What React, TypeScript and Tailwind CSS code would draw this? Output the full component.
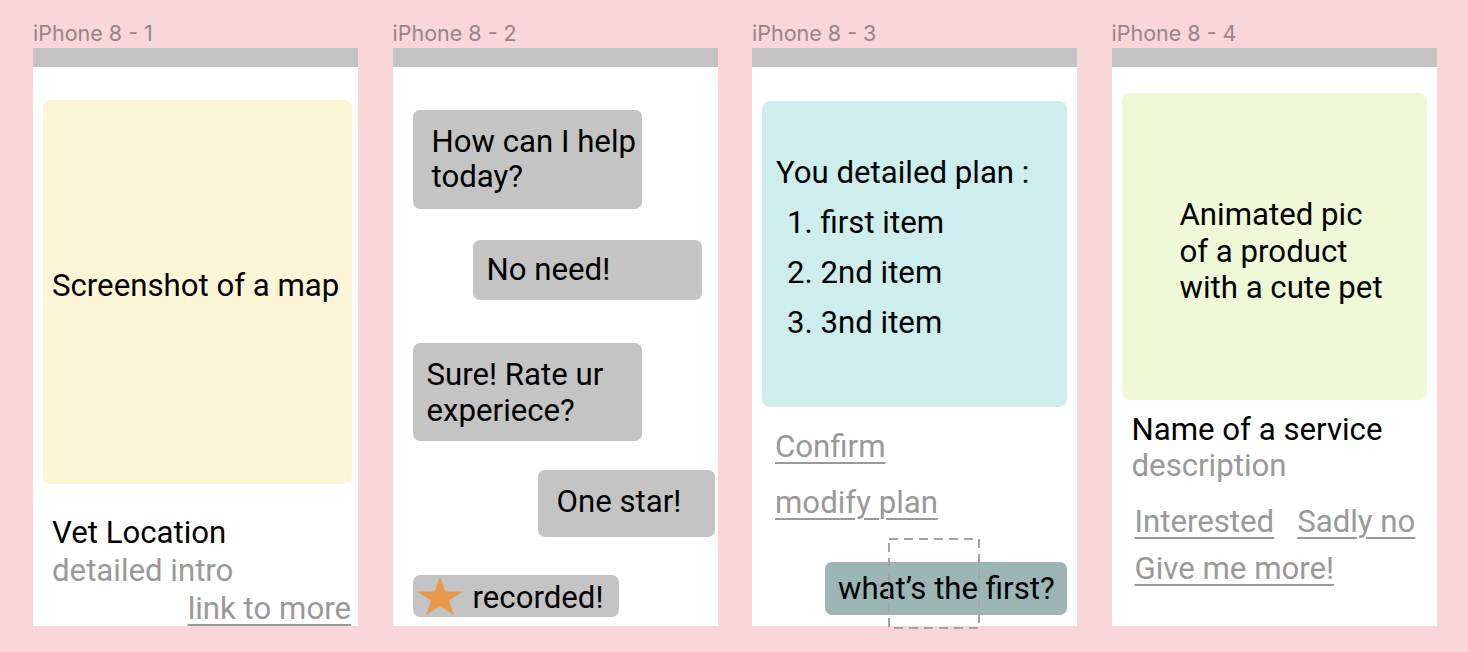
import React from "react";

// iPhone frame: label above, grey status bar, white body
function Frame({ label, children }: { label: string; children?: React.ReactNode }) {
  return (
    <div className="flex w-[325px] shrink-0 flex-col">
      <div className="h-[48px] pt-[21px] font-['Inter',_sans-serif] text-[21.5px] leading-[24px] text-[#978586]">{label}</div>
      <div className="relative flex h-[578px] flex-col bg-white [&>*]:shrink-0">
        <div className="h-[19px] bg-[#c4c4c4]" />
        {children}
      </div>
    </div>
  );
}

function Star() {
  return (
    <svg width="46" height="38" viewBox="0 0 46 38" className="shrink-0">
      <polygon
        points="23,0 28.4,14.5 46,14.5 31.8,23.5 37.2,38 23,29 8.8,38 14.2,23.5 0,14.5 17.6,14.5"
        fill="#e8994b"
      />
    </svg>
  );
}

const link = "underline decoration-[1.5px] underline-offset-[5px]";

export default function App() {
  return (
    <div className="flex h-[652px] w-full gap-[34.5px] overflow-hidden bg-[#f9d7d9] pl-[33px] font-['Roboto',_sans-serif] text-[31.2px] text-black">
      {/* 1: map */}
      <Frame label="iPhone 8 - 1">
        <div className="ml-[10px] mt-[33px] flex h-[384px] w-[309px] items-center rounded-[8px] bg-[#fcf6d6] pb-[11px] pl-[9px]">
          Screenshot of a map
        </div>
        <div className="mt-[30px] pl-[19px] pr-[7px] leading-[38px]">
          <p>Vet Location</p>
          <p className="text-[#999999]">detailed intro</p>
          <p className={`text-right text-[#999999] ${link}`}>link to more</p>
        </div>
      </Frame>

      {/* 2: chat */}
      <Frame label="iPhone 8 - 2">
        <div className="ml-[20px] mt-[43px] h-[99px] w-[229px] rounded-[7px] bg-[#c4c4c4] pl-[19px] pt-[14px] leading-[35px]">
          How can I help
          <br />
          today?
        </div>
        <div className="ml-[80px] mt-[31px] flex h-[60px] w-[229px] items-center rounded-[7px] bg-[#c4c4c4] pl-[14px]">
          No need!
        </div>
        <div className="ml-[20px] mt-[43px] h-[98px] w-[229px] rounded-[7px] bg-[#c4c4c4] pl-[14px] pt-[14px] leading-[36px]">
          Sure! Rate ur
          <br />
          experiece?
        </div>
        <div className="ml-[145px] mt-[29px] flex h-[67px] w-[177px] items-center rounded-[7px] bg-[#c4c4c4] pb-[3px] pl-[19px]">
          One star!
        </div>
        <div className="ml-[20px] mt-[38px] flex h-[42px] w-[206px] items-center gap-[10px] rounded-[7px] bg-[#c4c4c4] pl-[4px]">
          <Star />
          <span className="pt-[4px]">recorded!</span>
        </div>
      </Frame>

      {/* 3: plan */}
      <Frame label="iPhone 8 - 3">
        <div className="ml-[10px] mt-[34px] h-[306px] w-[305px] rounded-[8px] bg-[#cdeeed] pl-[14px] pt-[47px] leading-[50px]">
          <p>You detailed plan :</p>
          <p className="pl-[11px]">1. first item</p>
          <p className="pl-[11px]">2. 2nd item</p>
          <p className="pl-[11px]">3. 3nd item</p>
        </div>
        <div className="mt-[12px] pl-[23px] leading-[56px] text-[#999999]">
          <p><span className={link}>Confirm</span></p>
          <p><span className={link}>modify plan</span></p>
        </div>
        <div className="ml-[73px] mt-[31px] flex h-[53px] w-[242px] items-center rounded-[7px] bg-[#9bb6b5] pl-[13px] pt-[1px]">
          what’s the first?
        </div>
        <svg className="absolute left-[136px] top-[490px]" width="92" height="91" viewBox="0 0 92 91">
          <rect x="1" y="1" width="90" height="89" fill="none" stroke="#a3a3a3" strokeWidth="2" strokeDasharray="9 6" />
        </svg>
      </Frame>

      {/* 4: product */}
      <Frame label="iPhone 8 - 4">
        <div className="ml-[10px] mt-[26px] h-[307px] w-[305px] rounded-[8px] bg-[#eff8d7] pl-[58px] pt-[104px] leading-[36.5px]">
          Animated pic
          <br />
          of a product
          <br />
          with a cute pet
        </div>
        <div className="mt-[12px] pl-[20px] leading-[36px]">
          <p>Name of a service</p>
          <p className="text-[#999999]">description</p>
        </div>
        <div className="mt-[14px] pl-[23px] leading-[47px] text-[#999999]">
          <div className="flex gap-[23px]">
            <span className={link}>Interested</span>
            <span className={link}>Sadly no</span>
          </div>
          <p><span className={link}>Give me more!</span></p>
        </div>
      </Frame>
    </div>
  );
}
